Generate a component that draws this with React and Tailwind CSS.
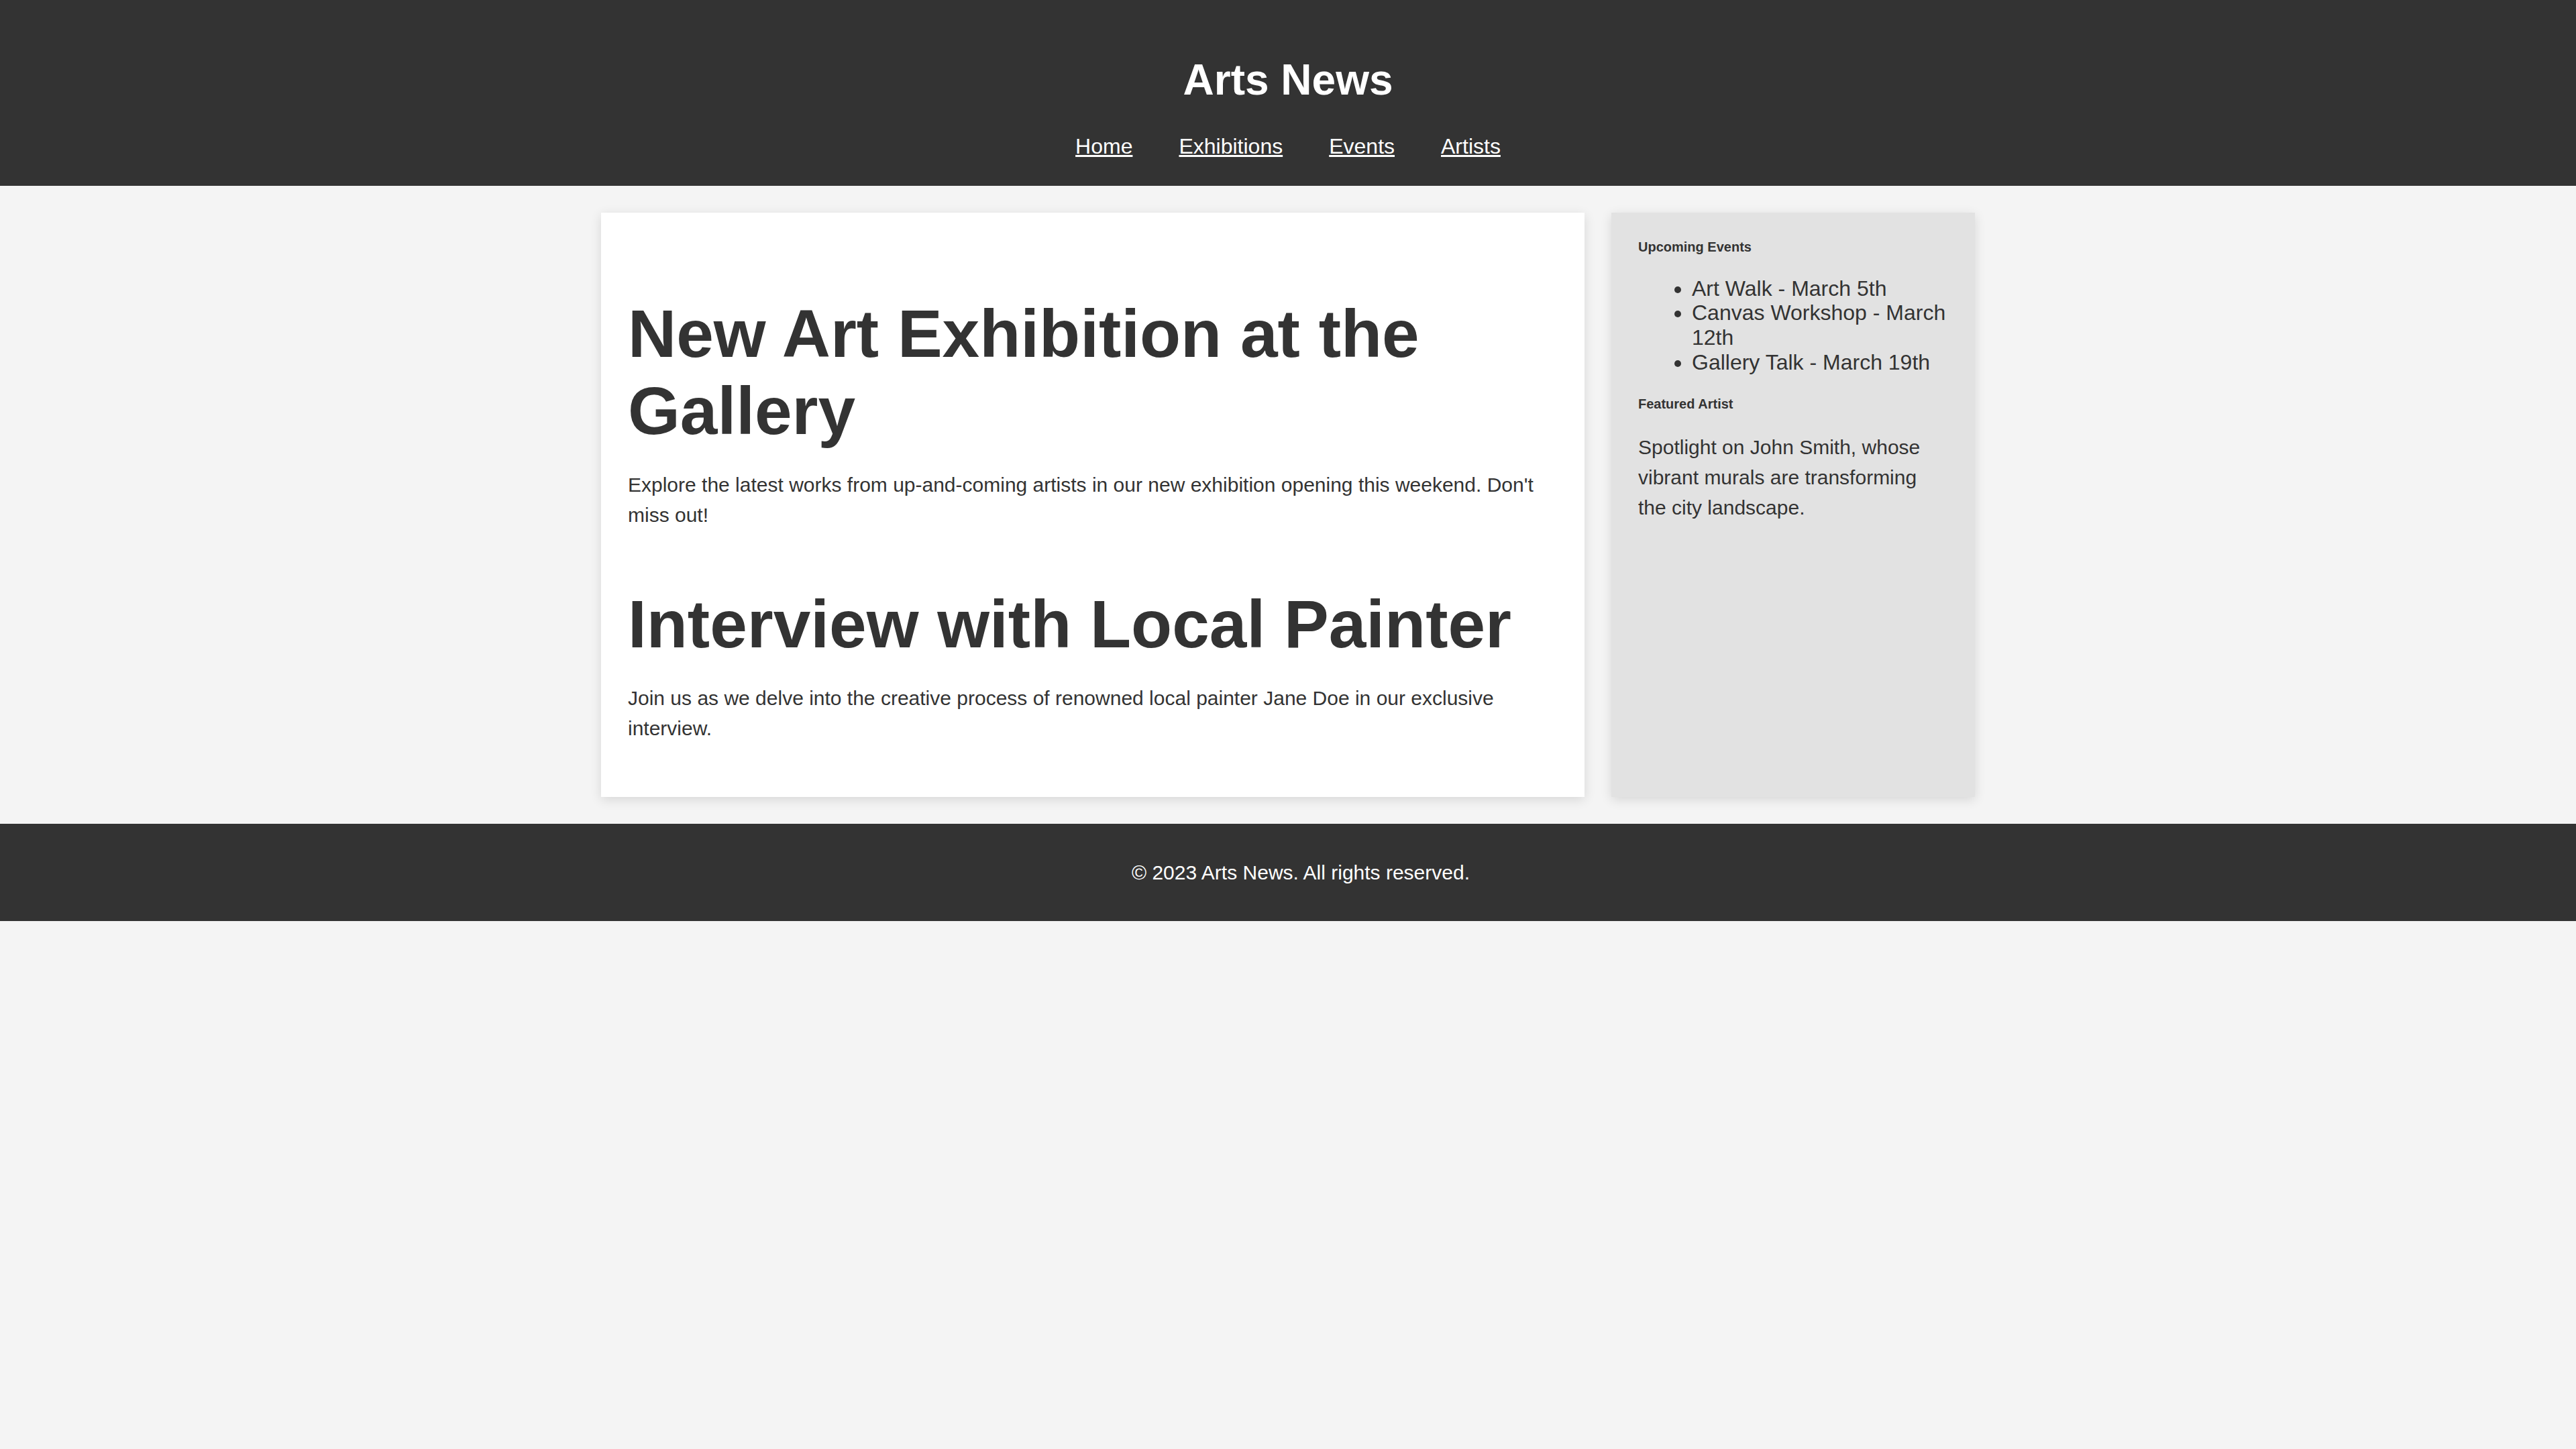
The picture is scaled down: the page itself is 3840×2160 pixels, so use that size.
import React from "react";

const navItems = ["Home", "Exhibitions", "Events", "Artists"];

const articles = [
    {
        title: "New Art Exhibition at the Gallery",
        body: "Explore the latest works from up-and-coming artists in our new exhibition opening this weekend. Don't miss out!"
    },
    {
        title: "Interview with Local Painter",
        body: "Join us as we delve into the creative process of renowned local painter Jane Doe in our exclusive interview."
    }
];

const events = ["Art Walk - March 5th", "Canvas Workshop - March 12th", "Gallery Talk - March 19th"];

const App = () => {
    return (
        <div className="min-h-screen bg-[#f4f4f4] text-[#333] font-['Liberation_Sans',Arial,sans-serif]">
            {/* Header */}
            <header className="bg-[#333] text-white text-center py-[40px]">
                <h1 className="text-[64px] font-bold leading-[1.15] my-[43px]">Arts News</h1>
                <nav>
                    <ul className="flex justify-center gap-[69px] text-[32px] leading-[37px]">
                        {navItems.map((item) => (
                            <li key={item}>
                                <a href="#" className="underline text-white">
                                    {item}
                                </a>
                            </li>
                        ))}
                    </ul>
                </nav>
            </header>

            {/* Main content */}
            <main className="max-w-[2048px] mx-auto mt-[40px] flex gap-[40px]">
                <section className="flex-[3] bg-white p-[40px] shadow-[0_4px_16px_rgba(0,0,0,0.12)]">
                    {articles.map((article) => (
                        <article key={article.title} className="mb-[40px]">
                            <h2 className="text-[100px] font-bold leading-[115px] mt-[83px]">{article.title}</h2>
                            <p className="text-[30px] leading-[1.5] my-[30px]">{article.body}</p>
                        </article>
                    ))}
                </section>

                <aside className="flex-[1] bg-[#e2e2e2] p-[40px] shadow-[0_4px_16px_rgba(0,0,0,0.12)]">
                    <h3 className="text-[20px] font-bold leading-[23px]">Upcoming Events</h3>
                    <ul className="list-disc pl-[80px] mt-[32px] mb-[32px] text-[32px] leading-[1.15]">
                        {events.map((ev) => (
                            <li key={ev}>{ev}</li>
                        ))}
                    </ul>
                    <h3 className="text-[20px] font-bold leading-[23px]">Featured Artist</h3>
                    <p className="text-[30px] leading-[1.5] mt-[30px]">
                        Spotlight on John Smith, whose vibrant murals are transforming the city landscape.
                    </p>
                </aside>
            </main>

            {/* Footer */}
            <footer className="bg-[#333] text-white text-center py-[50px] mt-[40px]">
                <p className="text-[30px] leading-[1.5] pl-[38px]">© 2023 Arts News. All rights reserved.</p>
            </footer>
        </div>
    );
};

export default App;
